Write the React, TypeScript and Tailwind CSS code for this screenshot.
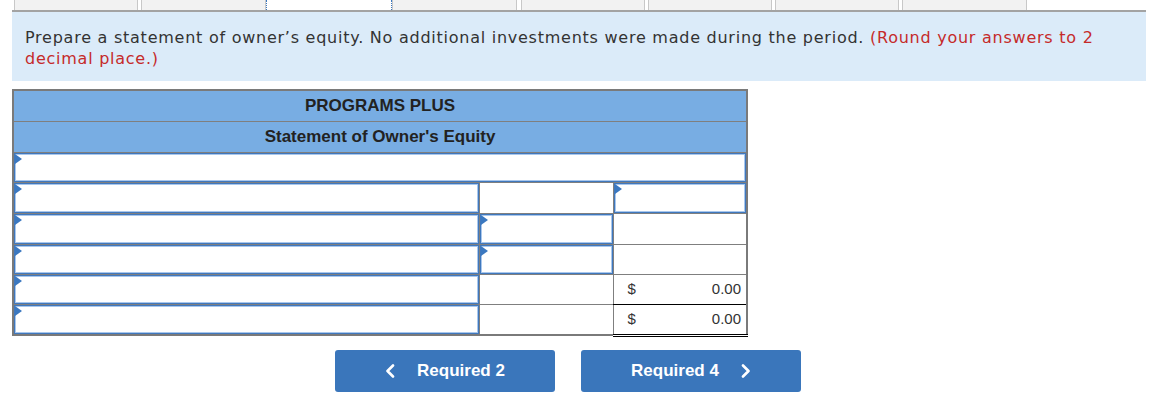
import React from 'react';

const TABS = [
  { w: 124, gap: 3 },
  { w: 125, gap: 0 },
  { w: 126, gap: 0, active: true },
  { w: 125, gap: 4 },
  { w: 124, gap: 3 },
  { w: 124, gap: 3 },
  { w: 124, gap: 3 },
  { w: 125, gap: 0 },
];

function Marker() {
  return (
    <svg className="absolute left-0 top-0" width="7" height="10" viewBox="0 0 7 10">
      <polygon points="0,0 7,5 0,10" fill="#3b78c0" />
    </svg>
  );
}

function InputBox() {
  return (
    <div className="relative h-full w-full border border-[#4078bd] ring-1 ring-inset ring-[#a9c7ec] bg-white">
      <Marker />
    </div>
  );
}

function Chevron({ dir }: { dir: 'left' | 'right' }) {
  return (
    <svg width="10" height="14" viewBox="0 0 10 14" fill="none">
      <polyline
        points={dir === 'left' ? '8,1.5 2.5,7 8,12.5' : '2,1.5 7.5,7 2,12.5'}
        stroke="white"
        strokeWidth="2.6"
        strokeLinecap="round"
        strokeLinejoin="round"
      />
    </svg>
  );
}

const c30 = 'border border-[#7f7f7f] p-0 h-[30px]';
const c31 = 'border border-[#7f7f7f] p-0 h-[31px]';

function Amount() {
  return (
    <div className="flex justify-between items-center pr-[5px] pl-[14px] text-[15px] text-[#333]">
      <span>$</span>
      <span>0.00</span>
    </div>
  );
}

export default function App() {
  return (
    <div className="w-[1152px] h-[417px] bg-white font-['Liberation_Sans',Arial,sans-serif]">
      {/* tab strip */}
      <div className="flex h-[12px] ml-[12px] mr-[6px] pl-[2px] border-b-2 border-[#a3a3a3]">
        {TABS.map((t, i) => (
          <div
            key={i}
            style={{ width: t.w, marginRight: t.gap }}
            className={
              t.active
                ? 'h-[10px] bg-white border-x border-dotted border-[#3b78c0]'
                : 'h-[10px] bg-[#f2f2f2] border-x border-[#c8c8c8]'
            }
          />
        ))}
      </div>

      {/* instructions */}
      <div className="ml-[12px] mr-[6px] bg-[#dbebf9] h-[69px] pl-[13px] pt-[15px] pr-[40px] font-['DejaVu_Sans',Verdana,sans-serif] text-[16px] tracking-[0.75px] leading-[21px] text-[#333]">
        Prepare a statement of owner’s equity. No additional investments were made during the period.{' '}
        <span className="text-[#c52a2a]">(Round your answers to 2 decimal place.)</span>
      </div>

      {/* statement table */}
      <div className="ml-[12px] mt-[8px] w-[734px]">
        <table className="w-full table-fixed border-collapse border-2 border-[#7a7a7a] text-[#222]">
          <colgroup>
            <col className="w-[466px]" />
            <col className="w-[134px]" />
            <col className="w-[134px]" />
          </colgroup>
          <tbody>
            <tr>
              <td colSpan={3} className="h-[31px] border border-[#7f7f7f] bg-[#78ade3] text-center font-bold text-[17px]">
                PROGRAMS PLUS
              </td>
            </tr>
            <tr>
              <td colSpan={3} className="h-[31px] border border-[#7f7f7f] bg-[#78ade3] text-center font-bold text-[17px]">
                Statement of Owner's Equity
              </td>
            </tr>
            <tr>
              <td colSpan={3} className={c30}>
                <InputBox />
              </td>
            </tr>
            <tr>
              <td className={c31}><InputBox /></td>
              <td className={c31}></td>
              <td className={c31}><InputBox /></td>
            </tr>
            <tr>
              <td className={c31}><InputBox /></td>
              <td className={c31}><InputBox /></td>
              <td className={c31}></td>
            </tr>
            <tr>
              <td className={c30}><InputBox /></td>
              <td className={c30}><InputBox /></td>
              <td className={c30}></td>
            </tr>
            <tr>
              <td className={c30}><InputBox /></td>
              <td className={`${c30} border-t-black`}></td>
              <td className={`${c30} border-t-black`}>
                <Amount />
              </td>
            </tr>
            <tr>
              <td className={c31}><InputBox /></td>
              <td className={c31}></td>
              <td className={`${c31} border-t-black border-b-[3px] border-b-black border-double`}>
                <Amount />
              </td>
            </tr>
          </tbody>
        </table>
      </div>

      {/* navigation */}
      <div className="flex gap-[26px] pl-[335px] mt-[13px]">
        <button className="flex items-center justify-center gap-[22px] w-[220px] h-[42px] rounded-[3px] bg-[#3a76bb] text-white font-bold text-[17px]">
          <Chevron dir="left" />
          <span>Required 2</span>
        </button>
        <button className="flex items-center justify-center gap-[22px] w-[220px] h-[42px] rounded-[3px] bg-[#3a76bb] text-white font-bold text-[17px]">
          <span>Required 4</span>
          <Chevron dir="right" />
        </button>
      </div>
    </div>
  );
}
